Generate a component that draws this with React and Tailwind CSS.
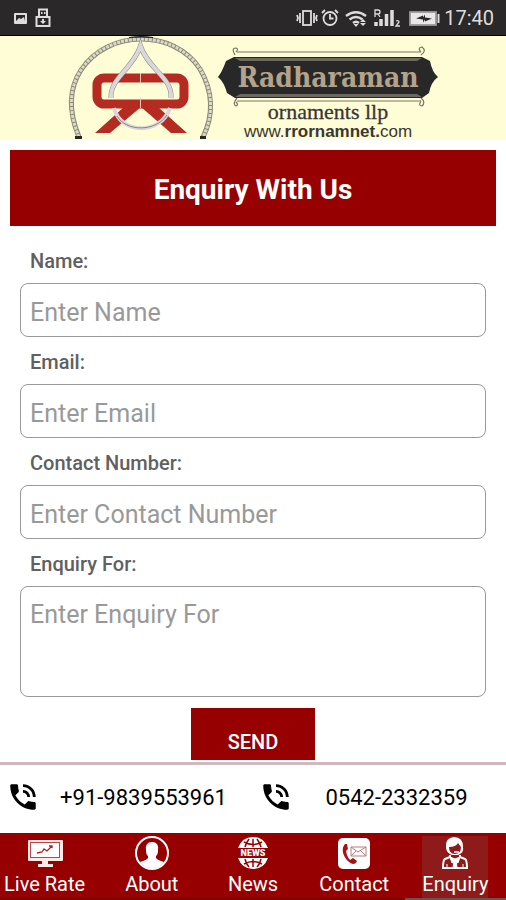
import React from "react";

const fields = [
  { id: "name", label: "Name:", hint: "Enter Name", type: "text" },
  { id: "email", label: "Email:", hint: "Enter Email", type: "email" },
  { id: "phone", label: "Contact Number:", hint: "Enter Contact Number", type: "tel" },
];

function StatusBar() {
  return (
    <div className="flex h-9 items-center justify-between border-b border-black bg-[#2a2829] px-3 text-[#dddddd]">
      <svg width="40" height="24" viewBox="0 0 40 24" aria-hidden="true">
        <rect x="2" y="7" width="13" height="11" rx="1" fill="#ddd" />
        <rect x="4" y="9" width="9" height="6" fill="#2a2829" />
        <path d="M4 15l3-3 2 1 3-2 1 4z" fill="#ddd" />
        <path d="M27 11V3.500h8V11M24.500 11h13v9h-13z" fill="none" stroke="#ddd" strokeWidth="2" />
        <path d="M29 6h1.500v2H29zM32 6h1.500v2H32zM30 13h2v2h2l-3 3-3-3h2z" fill="#ddd" />
      </svg>
      <div className="flex items-center">
        <svg width="148" height="24" viewBox="0 0 148 24" fill="none" stroke="#ddd" strokeWidth="1.8" aria-hidden="true">
          <rect x="7" y="5" width="8" height="14" />
          <path d="M4 7v10M1 9l1 3-1 3M18 7v10M21 9l-1 3 1 3" />
          <circle cx="34" cy="12.500" r="6.500" />
          <path d="M34 8v4.500h3.500M26 7l3-3M42 7l-3-3" />
          <path d="M50 10q10-7.500 20 0M53.500 13.500q6.500-5 13 0M57 17q3-2.500 6 0" strokeWidth="2.300" />
          <path d="M57.500 18l2.500 3 2.500-3zM67 13l3 3h-6zM67 20l3-3h-6z" fill="#ddd" stroke="none" />
          <path d="M80 20v-4M85 20v-7M90.500 20V8M96 20V4" strokeWidth="3.500" />
          <path d="M79 11V4h3q2 0 2 2t-2 2h-3m3 0l2 3" strokeWidth="1.300" />
          <path d="M100 15q3-1 3 1l-3 4h4" strokeWidth="1.300" />
          <rect x="114" y="6" width="26" height="13" fill="#e8e8e8" stroke="#999" />
          <path d="M142.500 8v9" strokeWidth="2" />
          <path d="M120 12.500l7-3v2l2-3v3l7 1-7 3v-2l-2 3v-3z" fill="#2a2829" stroke="none" />
        </svg>
        <time className="text-xl leading-6">17:40</time>
      </div>
    </div>
  );
}

function Brand() {
  return (
    <header className="flex h-[104px] justify-center bg-[#fffdd6]">
      <svg className="overflow-visible" width="376" height="104" viewBox="65 36 376 104" role="img" aria-label="Radharaman ornaments llp">
        <path d="M79 137C69 113 68 90 81 70C108 29 174 29 200 69C213 91 214 115 203 137" fill="none" stroke="#8a8a7d" strokeWidth="5" />
        <path d="M79 137C69 113 68 90 81 70C108 29 174 29 200 69C213 91 214 115 203 137" fill="none" stroke="#dcdac1" strokeWidth="3" strokeDasharray="3 1" />
        <path d="M129 37q12-2 24 0v1q-12-1-24 0zM75 136h7v3h-7zM200 136h6v3h-6z" fill="#272727" />
        <rect x="97" y="78" width="87" height="26" rx="7" fill="none" stroke="#b52b21" strokeWidth="9" />
        <path d="M124 107h17L110 133H95zM141 107h17l29 26h-16z" fill="#b52b21" />
        <path d="M140.500 73v10M140.500 98v10" stroke="#efc9b4" strokeWidth="1" />
        <path d="M111 98C110 78 133 69 140.500 46C148 69 173 78 171 98" fill="none" stroke="#8d8c8d" strokeWidth="5" />
        <path d="M111 98C110 78 133 69 140.500 46C148 69 173 78 171 98M114 108C121 135 161 135 170 108" fill="none" stroke="#d9d7da" strokeWidth="4" />
        <path d="M117 116C126 132 156 132 167 115" fill="none" stroke="#898886" strokeWidth="1" />
        <path d="M237 52h184M237 101h184" stroke="#777467" strokeWidth="1" />
        <path d="M235 55q-4-7 1-7 3 1 0 4M421 52q-4-4 1-5 5 4-1 8M237 98q-5 6-1 8 3-1 0-4M421 101q-3 5 1 5 4-4-1-8" fill="none" stroke="#777467" strokeWidth="1.200" />
        <path d="M218 77q4-5 8-16l8-4h188l8 4q2 11 8 16-7 5-9 16l-7 5H235l-8-5q-3-11-9-16z" fill="#292829" />
        <path d="M235 58h187l-5 3H240zM235 97h187l-5-3H240z" fill="#6b6962" />
        <text x="328" y="87" textAnchor="middle" fontFamily="DejaVu Serif Condensed, DejaVu Serif, serif" fontWeight="700" fontSize="28" fill="#b3a38a">Radharaman</text>
        <text x="328" y="119" textAnchor="middle" fontFamily="Liberation Serif, serif" fontSize="22" fill="#393735" stroke="#393735" strokeWidth=".3">ornaments llp</text>
        <text x="328" y="137" textAnchor="middle" fontFamily="Liberation Sans, sans-serif" fontSize="17" fill="#393735">www.<tspan fontWeight="700">rrornamnet.</tspan>com</text>
      </svg>
    </header>
  );
}

function PhoneIcon() {
  return (
    <svg className="shrink-0" width="34" height="34" viewBox="0 0 24 24" fill="#000" aria-hidden="true">
      <path d="M20 15.500c-1.250 0-2.450-.2-3.570-.57-.35-.11-.74-.03-1.020.24l-2.200 2.200c-2.830-1.440-5.150-3.750-6.590-6.590l2.200-2.210c.28-.26.360-.65.250-1C8.700 6.450 8.500 5.250 8.500 4c0-.55-.45-1-1-1H4c-.55 0-1 .45-1 1 0 9.390 7.610 17 17 17 .55 0 1-.45 1-1v-3.500c0-.55-.45-1-1-1zM19 12h2c0-4.970-4.030-9-9-9v2c3.870 0 7 3.130 7 7zm-4 0h2c0-2.760-2.240-5-5-5v2c1.660 0 3 1.340 3 3z" />
    </svg>
  );
}

function MonitorIcon() {
  return (
    <svg width="36" height="34" viewBox="0 0 36 34" fill="none" aria-hidden="true">
      <rect x="1" y="4" width="35" height="21" rx="1" fill="#ffe9e6" />
      <rect x="3.500" y="6.500" width="29" height="15" fill="#fff" stroke="#b44" />
      <path d="M10 17l5-1 2-3 3 2 5-5M22 10h3v2" stroke="#a22" strokeWidth="1.300" />
      <path d="M15 25h6v3h5v3H11v-3h4z" fill="#ffe9e6" />
    </svg>
  );
}

function PersonIcon() {
  return (
    <svg width="36" height="34" viewBox="0 0 36 34" aria-hidden="true">
      <circle cx="18" cy="17" r="16" fill="none" stroke="#fff" strokeWidth="2" />
      <path d="M14 20q-2-1-2-6-1-8 6-8t6 8q0 5-2 6v2q1 2 8 4-4 6-12 6T6 26q7-2 8-4z" fill="#fff" />
    </svg>
  );
}

function GlobeIcon() {
  return (
    <svg width="36" height="34" viewBox="0 0 36 34" aria-hidden="true">
      <path d="M3 12Q7 1 18 1t15 11zM3 22h30q-4 11-15 11T3 22z" fill="#fff" />
      <path d="M18 3v8M18 23v8M9 6q9 5 18 0M9 28q9-5 18 0M14 3q-3 4-4 8M22 3q3 4 4 8M10 23q1 5 4 8M26 23q-1 5-4 8" fill="none" stroke="#960000" strokeWidth="1.500" />
      <text x="18" y="20" textAnchor="middle" fontFamily="Roboto, sans-serif" fontSize="9" fontWeight="900" fill="#fff">NEWS</text>
    </svg>
  );
}

function ContactIcon() {
  return (
    <svg width="36" height="34" viewBox="0 0 36 34" fill="none" aria-hidden="true">
      <rect x="2" y="2" width="32" height="31" rx="5" fill="#fff" />
      <path d="M9 8q-3 3-2 9 3 9 10 11 3 0 4-3l-4-3-3 2q-3-3-4-9l2-2-1-5z" fill="#a31515" />
      <path d="M15 11h15v9H15zl7 5 8-5M15 20l5-5M30 20l-5-5" stroke="#c07b7b" strokeWidth="1" />
    </svg>
  );
}

function AgentIcon() {
  return (
    <svg width="36" height="34" viewBox="0 0 36 34" aria-hidden="true">
      <path d="M9 11Q8 2 17 1q9 0 9 10 1 5-3 7-5 3-10 0-4-2-4-7z" fill="#fff" />
      <path d="M12 11q7 0 9-4l3 4q0 7-6 7t-6-7z" fill="#8e1a1a" />
      <path d="M17 16h5" stroke="#fff" strokeWidth="1.500" />
      <path d="M13 19v2l-5 2q-2 1-2 9h24q0-8-2-9l-5-2v-2" fill="#8e1a1a" stroke="#fff" strokeWidth="2" />
      <path d="M13 21l5 2 5-2-2 6-3-2-3 2zM17 24h2l1 8h-4zM10 28v3M26 28v3" fill="#fff" stroke="#fff" />
    </svg>
  );
}

const tabs = [
  { name: "Live Rate", icon: <MonitorIcon /> },
  { name: "About", icon: <PersonIcon /> },
  { name: "News", icon: <GlobeIcon /> },
  { name: "Contact", icon: <ContactIcon /> },
  { name: "Enquiry", icon: <AgentIcon /> },
];

export default function App() {
  return (
    <div className="flex min-h-screen flex-col bg-white font-['Roboto',sans-serif]">
      <StatusBar />
      <Brand />
      <main className="flex-1 px-2.5 pt-2.5">
        <h1 className="flex h-[76px] items-center justify-center bg-[#960000] pt-1 text-[28px] leading-8 font-bold text-white">Enquiry With Us</h1>
        <form className="px-2.5 pt-[21px]" onSubmit={(event) => event.preventDefault()}>
          {fields.map((field) => (
            <div key={field.id} className="mb-[11px]">
              <label htmlFor={field.id} className="block h-9 px-2.5 pt-0.5 text-xl leading-6 font-medium text-[#606060]">{field.label}</label>
              <input id={field.id} type={field.type} placeholder={field.hint} className="block h-[54px] w-full rounded-lg border border-[#999999] px-[9px] pt-1 text-[25px] placeholder:text-[#999999]" />
            </div>
          ))}
          <label htmlFor="message" className="block h-9 px-2.5 pt-0.5 text-xl leading-6 font-medium text-[#606060]">Enquiry For:</label>
          <textarea id="message" placeholder="Enter Enquiry For" className="block h-[111px] w-full resize-none rounded-lg border border-[#999999] px-[9px] py-3 text-[25px] leading-8 placeholder:text-[#999999]" />
          <button type="submit" className="mx-auto mt-[11px] block h-[52px] w-[124px] bg-[#960000] pt-4 text-xl font-medium text-white">SEND</button>
        </form>
      </main>
      <section className="mt-0.5 grid h-[71px] shrink-0 grid-cols-2 border-t-[3px] border-[#cfb9bd]">
        <a href="tel:+919839553961" className="flex items-center px-1.5 pb-1 text-[22px] text-black">
          <PhoneIcon />
          <span className="flex-1 text-center">+91-9839553961</span>
        </a>
        <a href="tel:05422332359" className="flex items-center px-1.5 pb-1 text-[22px] text-black">
          <PhoneIcon />
          <span className="flex-1 text-center">0542-2332359</span>
        </a>
      </section>
      <nav className="grid h-[67px] shrink-0 grid-cols-5 bg-[#960000]">
        {tabs.map((tab) => (
          <button key={tab.name} type="button" className="group flex flex-col items-center border-b-2 border-[#800000] pt-[3px] text-xl leading-7 whitespace-nowrap text-white first:pr-3 last:border-[#655555]">
            <span className="flex flex-col items-center group-last:bg-[#8e1a1a]">
              {tab.icon}
              <span>{tab.name}</span>
            </span>
          </button>
        ))}
      </nav>
    </div>
  );
}
